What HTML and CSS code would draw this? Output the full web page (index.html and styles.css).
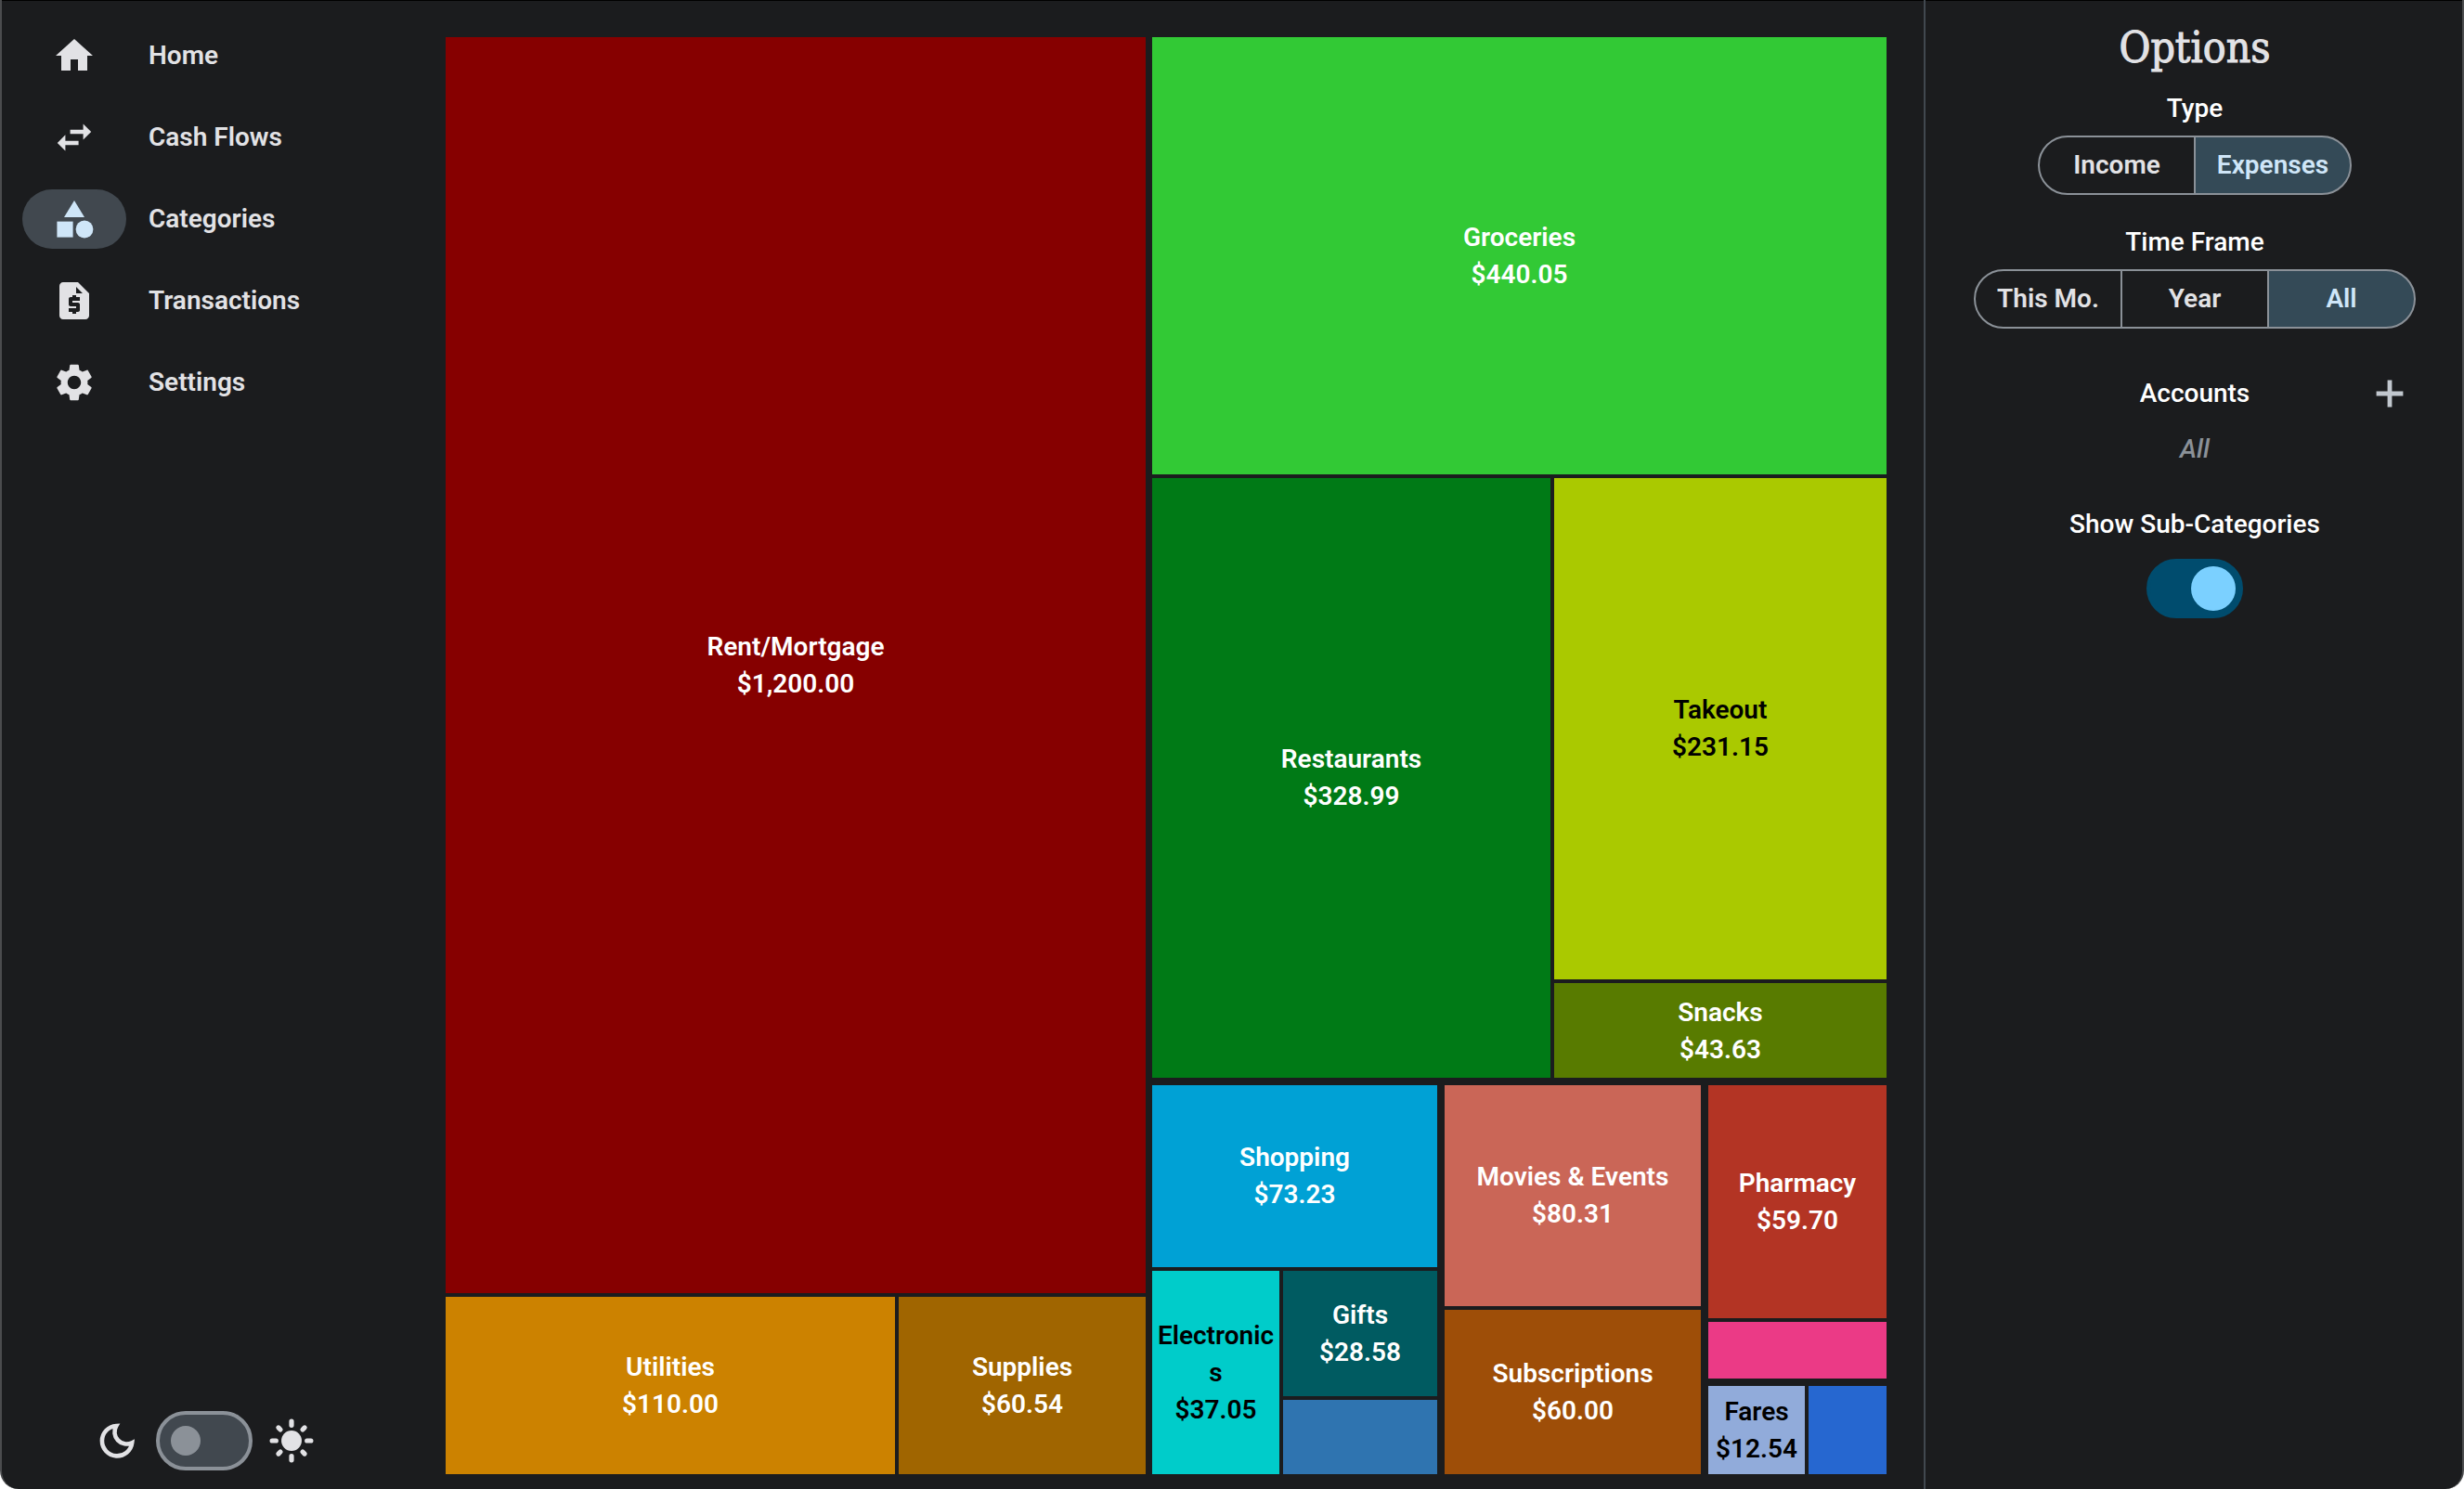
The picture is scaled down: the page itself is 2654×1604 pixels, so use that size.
FILE: index.html
```html
<!DOCTYPE html>
<html lang="en">
<head>
<meta charset="utf-8">
<title>Categories</title>
<link rel="stylesheet" href="styles.css">
</head>
<body>
<div class="window">
  <aside class="sidebar">
    <nav class="nav">
      <a class="nav-link" href="#home">
        <span class="nav-pill"><svg class="icon" viewBox="0 0 24 24"><path d="M10 20v-6h4v6h5v-8h3L12 3 2 12h3v8z"/></svg></span>Home</a>
      <a class="nav-link" href="#cash-flows">
        <span class="nav-pill"><svg class="icon" viewBox="0 0 24 24"><path d="M7.200 10.600L2.900 15l4.300 4.200v-3.100h7.100v-2.200H7.200zM21.100 9l-4.300-4.200v3.100H9.800v2.200h7v3.100z"/></svg></span>Cash Flows</a>
      <a class="nav-link is-active" href="#categories" aria-current="page">
        <span class="nav-pill"><svg class="icon" viewBox="0 0 24 24"><path d="M12 2l-5.500 9h11z"/><circle cx="17.500" cy="17.500" r="4.700"/><path d="M2.700 13.300h8.600v8.500H2.700z"/></svg></span>Categories</a>
      <a class="nav-link" href="#transactions">
        <span class="nav-pill"><svg class="icon" viewBox="0 0 24 24"><path fill-rule="evenodd" d="M14 2H6c-1.100 0-1.990.9-1.990 2L4 20c0 1.100.89 2 1.990 2H18c1.100 0 2-.9 2-2V8l-6-6zm1 10h-4v1h3c.55 0 1 .45 1 1v3c0 .55-.45 1-1 1h-1v1h-2v-1H9v-2h4v-1h-3c-.55 0-1-.45-1-1v-3c0-.55.45-1 1-1h1V9h2v1h2v2zm-2-4V4.500L16.500 8H13z"/></svg></span>Transactions</a>
      <a class="nav-link" href="#settings">
        <span class="nav-pill"><svg class="icon" viewBox="0 0 24 24"><path d="M19.140 12.940c.04-.3.060-.61.060-.94 0-.32-.02-.64-.07-.94l2.030-1.580c.18-.14.23-.41.12-.61l-1.920-3.320c-.12-.22-.37-.29-.59-.22l-2.390.96c-.5-.38-1.030-.7-1.620-.94l-.36-2.540c-.04-.24-.24-.41-.48-.41h-3.840c-.24 0-.43.17-.47.41l-.36 2.540c-.59.24-1.130.57-1.620.94l-2.390-.96c-.22-.08-.47 0-.59.22L2.740 8.870c-.12.21-.08.47.12.61l2.030 1.580c-.05.3-.09.63-.09.94s.02.64.07.94l-2.030 1.580c-.18.14-.23.41-.12.61l1.920 3.320c.12.22.37.29.59.22l2.390-.96c.5.38 1.030.7 1.620.94l.36 2.540c.05.24.24.41.48.41h3.840c.24 0 .44-.17.47-.41l.36-2.540c.59-.24 1.130-.56 1.620-.94l2.390.96c.22.08.47 0 .59-.22l1.920-3.320c.12-.22.07-.47-.12-.61l-2.010-1.580zM12 15.600c-1.980 0-3.600-1.620-3.600-3.600s1.620-3.600 3.600-3.600 3.600 1.620 3.600 3.600-1.620 3.600-3.600 3.600z"/></svg></span>Settings</a>
    </nav>
    <div class="theme">
      <svg class="icon" viewBox="0 0 24 24"><path fill="none" stroke="currentColor" stroke-width="2.300" d="M11.600 4A8.100 8.100 0 1 0 20.100 13.100A6.500 6.500 0 0 1 11.600 4z"/></svg>
      <input class="switch" type="checkbox" role="switch" aria-label="Light theme">
      <svg class="icon icon-sun" viewBox="0 0 46 46"><circle cx="23" cy="23" r="10.500"/><path fill="none" stroke="currentColor" stroke-width="5" stroke-linecap="round" d="M23 3v4M23 39v4M3 23h4M39 23h4M9.500 9.500l2 2M34.500 34.500l2 2M36.500 9.500l-2 2M11.500 34.500l-2 2"/></svg>
    </div>
  </aside>

  <main class="treemap">
    <div class="col" style="flex-grow:754">
      <div class="cell c-rent" style="flex-grow:1353">Rent/Mortgage<br>$1,200.00</div>
      <div class="row" style="flex-grow:191">
        <div class="cell c-utilities" style="flex-grow:484">Utilities<br>$110.00</div>
        <div class="cell c-supplies" style="flex-grow:266">Supplies<br>$60.54</div>
      </div>
    </div>
    <div class="col groups" style="flex-grow:791">
      <div class="col" style="flex-grow:1121">
        <div class="cell c-groceries" style="flex-grow:470">Groceries<br>$440.05</div>
        <div class="row" style="flex-grow:647">
          <div class="cell c-restaurants" style="flex-grow:429">Restaurants<br>$328.99</div>
          <div class="col" style="flex-grow:358">
            <div class="cell c-takeout dark-text" style="flex-grow:542">Takeout<br>$231.15</div>
            <div class="cell c-snacks" style="flex-grow:101">Snacks<br>$43.63</div>
          </div>
        </div>
      </div>
      <div class="row groups" style="flex-grow:419">
        <div class="col" style="flex-grow:307">
          <div class="cell c-shopping" style="flex-grow:195">Shopping<br>$73.23</div>
          <div class="row" style="flex-grow:220">
            <div class="cell c-electronics dark-text" style="flex-grow:137">Electronics<br>$37.05</div>
            <div class="col" style="flex-grow:166">
              <div class="cell c-gifts" style="flex-grow:136">Gifts<br>$28.58</div>
              <div class="cell c-steel" style="flex-grow:80"></div>
            </div>
          </div>
        </div>
        <div class="col" style="flex-grow:276">
          <div class="cell c-movies" style="flex-grow:238">Movies &amp; Events<br>$80.31</div>
          <div class="cell c-subscriptions" style="flex-grow:177">Subscriptions<br>$60.00</div>
        </div>
        <div class="col groups" style="flex-grow:192">
          <div class="col" style="flex-grow:316">
            <div class="cell c-pharmacy" style="flex-grow:252">Pharmacy<br>$59.70</div>
            <div class="cell c-pink" style="flex-grow:60"></div>
          </div>
          <div class="row" style="flex-grow:95">
            <div class="cell c-fares dark-text" style="flex-grow:104">Fares<br>$12.54</div>
            <div class="cell c-blue" style="flex-grow:84"></div>
          </div>
        </div>
      </div>
    </div>
  </main>

  <aside class="options">
    <h1 class="title">Options</h1>
    <section class="field">
      <h2 class="label">Type</h2>
      <div class="segments">
        <button class="segment segment-wide" type="button">Income</button>
        <button class="segment segment-wide is-on" type="button" aria-pressed="true">Expenses</button>
      </div>
    </section>
    <section class="field">
      <h2 class="label">Time Frame</h2>
      <div class="segments">
        <button class="segment" type="button">This Mo.</button>
        <button class="segment" type="button">Year</button>
        <button class="segment is-on" type="button" aria-pressed="true">All</button>
      </div>
    </section>
    <section class="accounts">
      <div class="accounts-head">
        <h2 class="label">Accounts</h2>
        <button class="add" type="button" aria-label="Add account"><svg class="icon" viewBox="0 0 24 24"><path d="M19.200 13.200h-6v6h-2.400v-6h-6v-2.400h6v-6h2.400v6h6z"/></svg></button>
      </div>
      <p class="none">All</p>
    </section>
    <div class="field field-switch">
      <label class="label" for="subs">Show Sub-Categories</label>
      <input class="switch" id="subs" type="checkbox" role="switch" checked>
    </div>
  </aside>
</div>
</body>
</html>
```
FILE: styles.css
```css
* { box-sizing: border-box; }

html { background: #fff; }

body {
  margin: 0;
  font: 600 28px/40px Roboto, "Noto Sans", sans-serif;
  color: #e2e2e5;
}

.window {
  display: grid;
  grid-template-columns: 478px 1fr 580px;
  min-height: 100vh;
  background: #1b1c1e;
  border: solid #4b4c4e;
  border-width: 0 2px;
  border-radius: 0 0 20px 20px;
  box-shadow: inset 0 1px #000;
}

.icon {
  width: 48px;
  height: 48px;
  fill: currentColor;
}

/* Sidebar */
.sidebar {
  display: flex;
  flex-direction: column;
  justify-content: space-between;
  padding: 28px 22px 20px;
}

.nav {
  display: flex;
  flex-direction: column;
  gap: 24px;
}

.nav-link {
  display: flex;
  align-items: center;
  gap: 24px;
  line-height: 42px;
  color: inherit;
  text-decoration: none;
}

.nav-pill {
  display: flex;
  align-items: center;
  justify-content: center;
  width: 112px;
  height: 64px;
  border-radius: 32px;
}

.is-active .nav-pill {
  background: #41484f;
  color: #cfe6f8;
}

.theme {
  display: flex;
  align-items: center;
  gap: 18px;
  padding-left: 78px;
}

/* Switch */
.switch {
  appearance: none;
  display: flex;
  align-items: center;
  width: 104px;
  height: 64px;
  margin: 0;
  padding: 0 12px;
  background: #41484f;
  border: 4px solid #8b9198;
  border-radius: 32px;
}

.switch::before {
  content: "";
  width: 32px;
  height: 32px;
  border-radius: 50%;
  background: #8b9198;
}

.switch:checked {
  justify-content: flex-end;
  padding: 0 4px;
  background: #004c6e;
  border-color: #004c6e;
}

.switch:checked::before {
  width: 48px;
  height: 48px;
  background: #7bd0ff;
}

/* Treemap */
.treemap {
  display: flex;
  gap: 7px;
  padding: 40px 40px 16px 0;
}

.col,
.row {
  display: flex;
  flex: 1 1 0;
  gap: 4px;
  min-width: 0;
  min-height: 0;
}

.col { flex-direction: column; }

.groups { gap: 8px; }

.cell {
  display: grid;
  flex: 1 1 0;
  align-content: center;
  justify-items: center;
  min-width: 0;
  min-height: 0;
  padding-top: 1px;
  color: #fff;
  text-align: center;
  overflow-wrap: anywhere;
}

.dark-text { color: #000; }

.c-rent { background: #860000; }
.c-utilities { background: #cc8200; }
.c-supplies { background: #a06500; }
.c-groceries { background: #32c935; }
.c-restaurants { background: #007a16; }
.c-takeout { background: #aac900; }
.c-snacks { background: #587b00; }
.c-shopping { background: #00a1d5; }
.c-electronics { background: #00ccca; }
.c-gifts { background: #005b61; }
.c-steel { background: #2f74b0; }
.c-movies { background: #ca6657; }
.c-subscriptions { background: #9e4e08; }
.c-pharmacy { background: #b33424; }
.c-pink { background: #eb3a86; }
.c-fares { background: #91abda; }
.c-blue { background: #2667d0; }

/* Options */
.options {
  display: flex;
  flex-direction: column;
  align-items: center;
  padding: 17px 0 16px 2px;
  border-left: 2px solid #41484f;
}

.title {
  margin: 0 0 11px;
  font: 400 46px/68px "Roboto Slab", "DejaVu Serif Condensed", "DejaVu Serif", serif;
  -webkit-text-stroke: 1px currentColor;
}

.label {
  margin: 0;
  font: inherit;
  font-weight: 500;
  line-height: 42px;
  color: #fff;
}

.field {
  display: flex;
  flex-direction: column;
  align-items: center;
  gap: 8px;
  margin-bottom: 30px;
}

.field-switch { gap: 16px; }

.segments { display: flex; }

.segment {
  width: 160px;
  height: 64px;
  margin: 0 0 0 -2px;
  padding: 0;
  font: inherit;
  color: inherit;
  background: none;
  border: 2px solid #8b9198;
}

.segment-wide { width: 170px; }

.segment:first-child {
  margin-left: 0;
  border-radius: 32px 0 0 32px;
}

.segment:last-child { border-radius: 0 32px 32px 0; }

.segment.is-on {
  background: #344a57;
  color: #cfe6f8;
}

.accounts {
  align-self: stretch;
  margin-bottom: 40px;
}

.accounts-head {
  display: grid;
  grid-template-columns: 1fr auto 1fr;
  align-items: center;
  height: 80px;
}

.accounts-head .label { grid-column: 2; }

.add {
  display: flex;
  justify-self: end;
  margin-right: 54px;
  padding: 0;
  color: #c1c7ce;
  background: none;
  border: 0;
}

.none {
  margin: 0;
  font-style: italic;
  font-weight: 500;
  color: #8b9198;
  text-align: center;
}
```
